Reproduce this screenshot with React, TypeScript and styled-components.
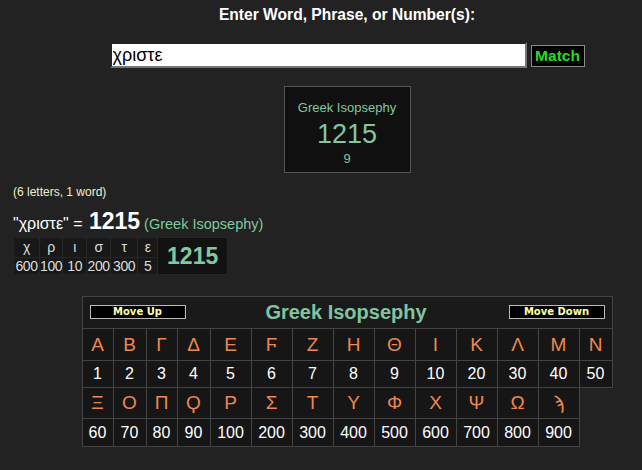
import React from "react";
import styled, { createGlobalStyle } from "styled-components";

const GlobalStyle = createGlobalStyle`
  html, body { margin: 0; padding: 0; background: #222222; }
  body { font-family: "Liberation Sans", Arial, sans-serif; color: #ffffff; }
  * { box-sizing: border-box; }
`;

const Page = styled.div`
  width: 642px;
  min-height: 470px;
  background: #222222;
  padding-top: 5px;
`;

const Centered = styled.div`
  padding-left: 52px;
  display: flex;
  flex-direction: column;
  align-items: center;
`;

const Heading = styled.div`
  font-weight: bold;
  font-size: 15.6px;
  line-height: 19px;
  color: #ffffff;
  text-align: center;
`;

const SearchRow = styled.form`
  display: flex;
  align-items: center;
  gap: 4px;
  margin-top: 18px;
`;

const SearchInput = styled.input`
  width: 417px;
  height: 26px;
  border: 2px solid #767676;
  border-style: inset;
  background: #ffffff;
  font-family: "Liberation Sans", Arial, sans-serif;
  font-size: 18px;
  color: #000000;
  padding: 0 1px;
  outline: none;
`;

const MatchButton = styled.button`
  width: 54px;
  height: 22px;
  background: #000000;
  border: 1px solid #8a8a8a;
  color: #22dd22;
  font-family: "Liberation Sans", Arial, sans-serif;
  font-weight: bold;
  font-size: 15.5px;
  padding: 0;
  margin-top: 2px;
`;

const ResultBox = styled.div`
  margin-top: 18px;
  width: 127px;
  height: 87px;
  background: #101010;
  border: 1px solid #555555;
  display: flex;
  flex-direction: column;
  align-items: center;
  padding-top: 13px;
  color: #80c8a0;
`;

const BoxTitle = styled.div`
  font-size: 13px;
  line-height: 15px;
`;

const BoxValue = styled.div`
  font-size: 27px;
  line-height: 30px;
  margin-top: 4px;
`;

const BoxSub = styled.div`
  font-size: 13px;
  line-height: 15px;
  margin-top: 2px;
`;

const LeftSection = styled.div`
  padding-left: 13px;
`;

const WordCount = styled.div`
  margin-top: 12px;
  font-size: 12px;
  line-height: 14px;
  color: #eeeecc;
`;

const Equation = styled.div`
  margin-top: 10px;
  height: 24px;
  display: flex;
  align-items: baseline;
  font-size: 16px;
  line-height: 24px;
  color: #ffffff;
  white-space: pre;
`;

const EqValue = styled.span`
  font-weight: bold;
  font-size: 23px;
  line-height: 24px;
`;

const EqCipher = styled.span`
  font-size: 14.5px;
  line-height: 24px;
  color: #80c8a0;
`;

const Breakdown = styled.table`
  margin-top: 4px;
  border-collapse: collapse;
  background: #181818;
`;

const BdCell = styled.td<{ $w: number; $h: number }>`
  width: ${(p) => p.$w}px;
  min-width: ${(p) => p.$w}px;
  height: ${(p) => p.$h}px;
  padding: 0;
  border: 1px solid #262626;
  text-align: center;
  font-size: 14px;
  line-height: 15px;
  letter-spacing: -0.4px;
  color: #dddddd;
  white-space: nowrap;
`;

const BdTotal = styled.td`
  width: 70px;
  padding: 0;
  border: 1px solid #262626;
  background: #121212;
  text-align: center;
  font-weight: bold;
  font-size: 23px;
  color: #80c8a0;
`;

const ChartWrap = styled.div`
  margin-top: 21px;
`;

const Chart = styled.table`
  border-collapse: collapse;
  table-layout: fixed;
`;

const HeaderCell = styled.td`
  height: 32px;
  padding: 0 7px;
  border: 1px solid #444444;
  background: #1a1a1a;
`;

const HeaderInner = styled.div`
  display: flex;
  align-items: center;
  justify-content: space-between;
`;

const MoveButton = styled.button`
  width: 96px;
  height: 14px;
  padding: 0;
  background: #000000;
  border: 1px solid #bbbbbb;
  color: #ffffaa;
  font-family: "DejaVu Sans", Verdana, sans-serif;
  font-weight: bold;
  font-size: 10px;
  line-height: 12px;
  margin-top: -2px;
`;

const ChartTitle = styled.div`
  font-weight: bold;
  font-size: 20px;
  color: #80c4a0;
  margin-left: -2px;
`;

const LetterCell = styled.td<{ $h: number }>`
  height: ${(p) => p.$h}px;
  padding: 0;
  border: 1px solid #444444;
  background: #161616;
  text-align: center;
  font-size: 19px;
  color: #ee8850;
`;

const NumberCell = styled.td<{ $h: number }>`
  height: ${(p) => p.$h}px;
  padding: 0;
  border: 1px solid #444444;
  background: #161616;
  text-align: center;
  font-size: 16px;
  color: #ffffff;
`;

const colWidths = [31, 33, 31, 33, 41, 41, 41, 41, 41, 41, 41, 41, 41, 33];

const row1 = [
  ["Α", 1], ["Β", 2], ["Γ", 3], ["Δ", 4], ["Ε", 5], ["Ϝ", 6], ["Ζ", 7],
  ["Η", 8], ["Θ", 9], ["Ι", 10], ["Κ", 20], ["Λ", 30], ["Μ", 40], ["Ν", 50],
] as const;

const row2 = [
  ["Ξ", 60], ["Ο", 70], ["Π", 80], ["Ϙ", 90], ["Ρ", 100], ["Σ", 200], ["Τ", 300],
  ["Υ", 400], ["Φ", 500], ["Χ", 600], ["Ψ", 700], ["Ω", 800], ["ϡ", 900],
] as const;

const breakdown: [string, number, number][] = [
  ["χ", 600, 26],
  ["ρ", 100, 23],
  ["ι", 10, 24],
  ["σ", 200, 24],
  ["τ", 300, 27],
  ["ε", 5, 20],
];

export default function App() {
  return (
    <Page>
      <GlobalStyle />
      <Centered>
        <Heading>Enter Word, Phrase, or Number(s):</Heading>
        <SearchRow onSubmit={(e) => e.preventDefault()}>
          <SearchInput defaultValue="χριστε" />
          <MatchButton type="submit">Match</MatchButton>
        </SearchRow>
        <ResultBox>
          <BoxTitle>Greek Isopsephy</BoxTitle>
          <BoxValue>1215</BoxValue>
          <BoxSub>9</BoxSub>
        </ResultBox>
      </Centered>
      <LeftSection>
        <WordCount>(6 letters, 1 word)</WordCount>
        <Equation>
          <span>"χριστε" =</span>
          <EqValue> 1215</EqValue>
          <EqCipher> (Greek Isopsephy)</EqCipher>
        </Equation>
        <Breakdown>
          <tbody>
            <tr>
              {breakdown.map(([l, , w]) => (
                <BdCell key={l} $w={w} $h={20}>{l}</BdCell>
              ))}
              <BdTotal rowSpan={2}>1215</BdTotal>
            </tr>
            <tr>
              {breakdown.map(([l, v, w]) => (
                <BdCell key={l} $w={w} $h={17}>{v}</BdCell>
              ))}
            </tr>
          </tbody>
        </Breakdown>
      </LeftSection>
      <Centered>
        <ChartWrap>
          <Chart>
            <colgroup>
              {colWidths.map((w, i) => (
                <col key={i} style={{ width: w }} />
              ))}
            </colgroup>
            <tbody>
              <tr>
                <HeaderCell colSpan={14}>
                  <HeaderInner>
                    <MoveButton type="button">Move Up</MoveButton>
                    <ChartTitle>Greek Isopsephy</ChartTitle>
                    <MoveButton type="button">Move Down</MoveButton>
                  </HeaderInner>
                </HeaderCell>
              </tr>
              <tr>
                {row1.map(([l]) => (
                  <LetterCell key={l} $h={32}>{l}</LetterCell>
                ))}
              </tr>
              <tr>
                {row1.map(([l, v]) => (
                  <NumberCell key={l} $h={27}>{v}</NumberCell>
                ))}
              </tr>
              <tr>
                {row2.map(([l]) => (
                  <LetterCell key={l} $h={31}>{l}</LetterCell>
                ))}
              </tr>
              <tr>
                {row2.map(([l, v]) => (
                  <NumberCell key={l} $h={28}>{v}</NumberCell>
                ))}
              </tr>
            </tbody>
          </Chart>
        </ChartWrap>
      </Centered>
    </Page>
  );
}
